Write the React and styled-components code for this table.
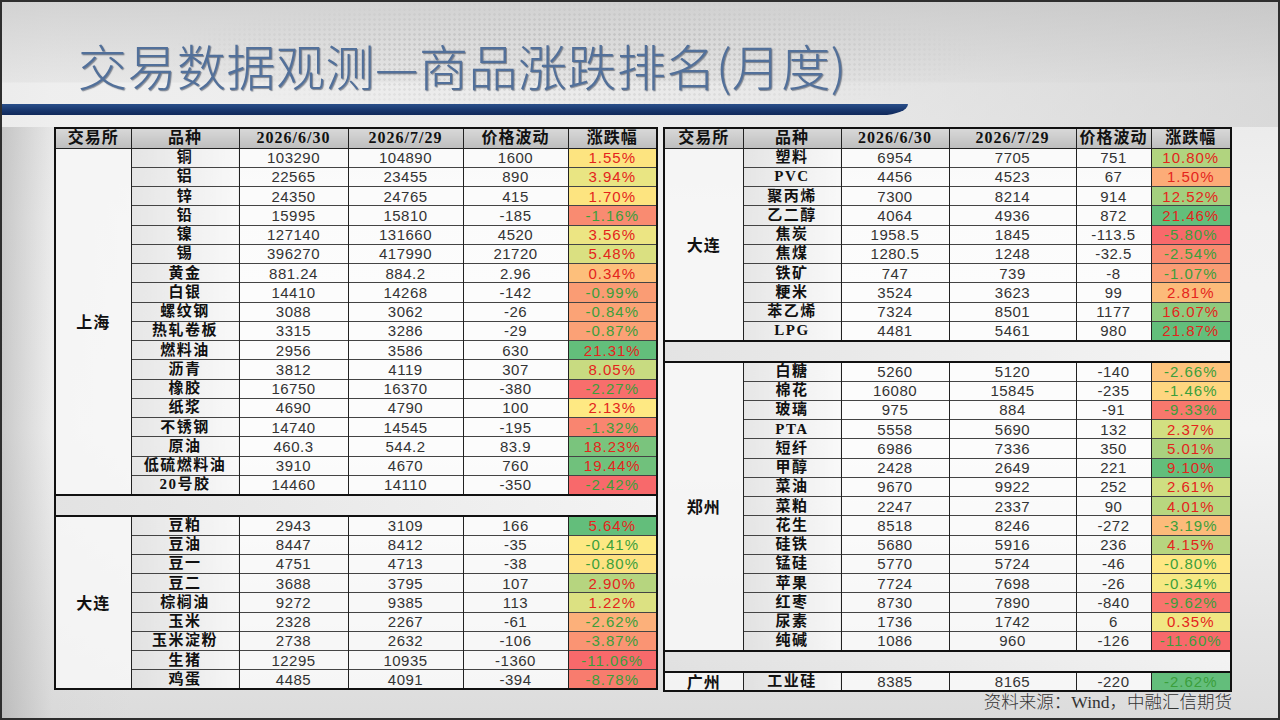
import React from 'react'
import styled, { createGlobalStyle } from 'styled-components'

const GlobalStyle = createGlobalStyle`
  html, body {
    margin: 0;
    padding: 0;
  }
  body {
    font-family: "Liberation Sans", "Noto Sans CJK SC", sans-serif;
    background: #222;
  }
`

const Slide = styled.div`
  width: 1280px;
  height: 720px;
  box-sizing: border-box;
  border: 2px solid #2e2e2e;
  overflow: hidden;
  position: relative;
  background:
    linear-gradient(90deg, rgba(150,150,150,0.45) 0, rgba(200,200,200,0.15) 50px, rgba(255,255,255,0) 130px),
    linear-gradient(180deg, #e4e4e4 0%, #f1f1f1 30%, #f4f4f4 60%, #dcdcdc 100%);
`

const Header = styled.div`
  height: 125px;
  display: flex;
  flex-direction: column;
  position: relative;
  background:
    linear-gradient(180deg, rgba(190,190,190,0.55) 0, rgba(215,215,215,0.35) 80px, rgba(240,240,240,0) 81px),
    linear-gradient(90deg, rgba(240,240,240,0.9) 0, rgba(232,232,232,0.6) 60%, rgba(205,205,205,0.6) 100%);

  &::before {
    content: "";
    position: absolute;
    left: 20px;
    top: 0;
    width: 1000px;
    height: 120px;
    background: radial-gradient(circle, rgba(160,160,160,0.55) 1px, transparent 1.6px) 0 0 / 5px 5px;
    -webkit-mask-image: radial-gradient(ellipse 55% 70% at 55% 45%, #000 30%, transparent 75%);
    mask-image: radial-gradient(ellipse 55% 70% at 55% 45%, #000 30%, transparent 75%);
    opacity: 0.6;
    pointer-events: none;
  }
`

const Title = styled.h1`
  margin: 0;
  padding: 37px 0 0 76px;
  font-family: "Noto Sans CJK SC", sans-serif;
  font-weight: 300;
  font-size: 49px;
  line-height: 52px;
  letter-spacing: 0.5px;
  color: #52709a;
  text-shadow: 1px 1px 1px rgba(30, 40, 60, 0.5);
  position: relative;
  white-space: nowrap;
`

const Bar = styled.div`
  margin-top: 13px;
  width: 906px;
  height: 11px;
  background: linear-gradient(180deg, #2a4f8a 0%, #17356b 60%, #10285a 100%);
  border-radius: 0 0 26px 0 / 0 0 11px 0;
  position: relative;
`

const Body = styled.div`
  display: flex;
  align-items: flex-start;
  gap: 5px;
  padding-left: 52px;
`

const Table = styled.table`
  border-collapse: collapse;
  table-layout: fixed;
  width: ${p => p.$w}px;
  border: 2px solid #111;
`

const HeadRow = styled.tr`
  height: 20px;
`

const Row = styled.tr`
  height: 19.25px;
`

const HeadCell = styled.th`
  padding: 0;
  border: 1px solid #222;
  background: linear-gradient(180deg, rgba(215,215,215,0.95), rgba(188,188,188,0.95));
  font-family: "Liberation Serif", "Noto Sans CJK SC", serif;
  font-weight: 700;
  font-size: 16px;
  letter-spacing: 1px;
  color: #111;
  line-height: 1;
  white-space: nowrap;
  overflow: hidden;
`

const Cell = styled.td`
  padding: 0;
  border-left: 1px solid #222;
  border-right: 1px solid #222;
  border-top: 1px solid #444;
  text-align: center;
  line-height: 1;
  white-space: nowrap;
`

const ExchangeCell = styled(Cell)`
  background: rgba(246, 246, 246, 0.88);
  font-family: "Noto Sans CJK SC", sans-serif;
  font-weight: 700;
  font-size: 16px;
  letter-spacing: 1px;
  color: #111;
`

const NameCell = styled(Cell)`
  background: linear-gradient(90deg, rgba(225,225,225,0.7), rgba(250,250,250,0.85));
  font-family: "Liberation Serif", "Noto Sans CJK SC", serif;
  font-weight: 700;
  font-size: 15px;
  letter-spacing: 1.5px;
  color: #111;
`

const NumCell = styled(Cell)`
  background: rgba(255, 255, 255, 0.72);
  font-size: 15px;
  letter-spacing: 0.5px;
  color: #333;
`

const PctCell = styled(Cell)`
  background: ${p => p.$bg};
  font-size: 15px;
  letter-spacing: 1px;
  color: ${p => (p.$up ? '#e4241c' : '#3b9f3b')};
`

const GapCell = styled.td`
  height: 19.25px;
  padding: 0;
  border-top: 2px solid #111;
  border-bottom: 2px solid #111;
  background: linear-gradient(90deg, rgba(225,225,225,0.85), rgba(245,245,245,0.85));
`

const Footer = styled.div`
  display: flex;
  justify-content: flex-end;
  padding-right: 46px;
  font-family: "Liberation Serif", "Noto Sans CJK SC", serif;
  font-size: 17.5px;
  font-weight: 300;
  color: #333;
  line-height: 20px;
`

const heads = ['交易所', '品种', '2026/6/30', '2026/7/29', '价格波动', '涨跌幅']

const leftGroups = [
  {
    ex: '上海',
    rows: [
      ['铜', '103290', '104890', '1600', '1.55%', '#fde480'],
      ['铝', '22565', '23455', '890', '3.94%', '#e9e583'],
      ['锌', '24350', '24765', '415', '1.70%', '#fde480'],
      ['铅', '15995', '15810', '-185', '-1.16%', '#f98b71'],
      ['镍', '127140', '131660', '4520', '3.56%', '#ece583'],
      ['锡', '396270', '417990', '21720', '5.48%', '#dae081'],
      ['黄金', '881.24', '884.2', '2.96', '0.34%', '#fdbf7b'],
      ['白银', '14410', '14268', '-142', '-0.99%', '#fa9c74'],
      ['螺纹钢', '3088', '3062', '-26', '-0.84%', '#fba376'],
      ['热轧卷板', '3315', '3286', '-29', '-0.87%', '#fba176'],
      ['燃料油', '2956', '3586', '630', '21.31%', '#63be7b'],
      ['沥青', '3812', '4119', '307', '8.05%', '#c8db81'],
      ['橡胶', '16750', '16370', '-380', '-2.27%', '#f86e6c'],
      ['纸浆', '4690', '4790', '100', '2.13%', '#fee983'],
      ['不锈钢', '14740', '14545', '-195', '-1.32%', '#f98570'],
      ['原油', '460.3', '544.2', '83.9', '18.23%', '#7ac47d'],
      ['低硫燃料油', '3910', '4670', '760', '19.44%', '#70c17c'],
      ['20号胶', '14460', '14110', '-350', '-2.42%', '#f8696b'],
    ],
  },
  {
    ex: '大连',
    rows: [
      ['豆粕', '2943', '3109', '166', '5.64%', '#63be7b'],
      ['豆油', '8447', '8412', '-35', '-0.41%', '#fde983'],
      ['豆一', '4751', '4713', '-38', '-0.80%', '#fee282'],
      ['豆二', '3688', '3795', '107', '2.90%', '#b6d57f'],
      ['棕榈油', '9272', '9385', '113', '1.22%', '#dce182'],
      ['玉米', '2328', '2267', '-61', '-2.62%', '#fcb07a'],
      ['玉米淀粉', '2738', '2632', '-106', '-3.87%', '#fa9473'],
      ['生猪', '12295', '10935', '-1360', '-11.06%', '#f8696b'],
      ['鸡蛋', '4485', '4091', '-394', '-8.78%', '#f87c6e'],
    ],
  },
]

const rightGroups = [
  {
    ex: '大连',
    rows: [
      ['塑料', '6954', '7705', '751', '10.80%', '#b1d47f'],
      ['PVC', '4456', '4523', '67', '1.50%', '#fcac78'],
      ['聚丙烯', '7300', '8214', '914', '12.52%', '#a4cf7e'],
      ['乙二醇', '4064', '4936', '872', '21.46%', '#63be7b'],
      ['焦炭', '1958.5', '1845', '-113.5', '-5.80%', '#f8696b'],
      ['焦煤', '1280.5', '1248', '-32.5', '-2.54%', '#f98a70'],
      ['铁矿', '747', '739', '-8', '-1.07%', '#fa9c74'],
      ['粳米', '3524', '3623', '99', '2.81%', '#fcbb7a'],
      ['苯乙烯', '7324', '8501', '1177', '16.07%', '#8fca7e'],
      ['LPG', '4481', '5461', '980', '21.87%', '#63be7b'],
    ],
  },
  {
    ex: '郑州',
    rows: [
      ['白糖', '5260', '5120', '-140', '-2.66%', '#fdc47d'],
      ['棉花', '16080', '15845', '-235', '-1.46%', '#fed680'],
      ['玻璃', '975', '884', '-91', '-9.33%', '#f8786d'],
      ['PTA', '5558', '5690', '132', '2.37%', '#d2df81'],
      ['短纤', '6986', '7336', '350', '5.01%', '#aad17f'],
      ['甲醇', '2428', '2649', '221', '9.10%', '#63be7b'],
      ['菜油', '9670', '9922', '252', '2.61%', '#cfde81'],
      ['菜粕', '2247', '2337', '90', '4.01%', '#b8d67f'],
      ['花生', '8518', '8246', '-272', '-3.19%', '#fcbb7a'],
      ['硅铁', '5680', '5916', '236', '4.15%', '#b7d57f'],
      ['锰硅', '5770', '5724', '-46', '-0.80%', '#fee783'],
      ['苹果', '7724', '7698', '-26', '-0.34%', '#f6e883'],
      ['红枣', '8730', '7890', '-840', '-9.62%', '#f8746d'],
      ['尿素', '1736', '1742', '6', '0.35%', '#f1e783'],
      ['纯碱', '1086', '960', '-126', '-11.60%', '#f8696b'],
    ],
  },
  {
    ex: '广州',
    rows: [['工业硅', '8385', '8165', '-220', '-2.62%', '#63be7b']],
  },
]

const PriceTable = ({ groups, cols }) => {
  const total = cols.reduce((a, b) => a + b, 0)
  return (
    <Table $w={total}>
      <colgroup>
        {cols.map((c, i) => <col key={i} style={{ width: c }} />)}
      </colgroup>
      <thead>
        <HeadRow>
          {heads.map(h => <HeadCell key={h}>{h}</HeadCell>)}
        </HeadRow>
      </thead>
      <tbody>
        {groups.map((g, gi) => (
          <React.Fragment key={gi}>
            {gi > 0 && (
              <Row>
                <GapCell colSpan={6} />
              </Row>
            )}
            {g.rows.map((r, ri) => (
              <Row key={r[0]}>
                {ri === 0 && <ExchangeCell rowSpan={g.rows.length}>{g.ex}</ExchangeCell>}
                <NameCell>{r[0]}</NameCell>
                <NumCell>{r[1]}</NumCell>
                <NumCell>{r[2]}</NumCell>
                <NumCell>{r[3]}</NumCell>
                <PctCell $bg={r[5]} $up={!r[4].startsWith('-')}>{r[4]}</PctCell>
              </Row>
            ))}
          </React.Fragment>
        ))}
      </tbody>
    </Table>
  )
}

const App = () => {
  return (
    <Slide>
      <GlobalStyle />
      <Header>
        <Title>交易数据观测—商品涨跌排名(月度)</Title>
        <Bar />
      </Header>
      <Body>
        <PriceTable groups={leftGroups} cols={[76, 108, 109, 115, 105, 89]} />
        <PriceTable groups={rightGroups} cols={[79, 98, 108, 127, 75, 80]} />
      </Body>
      <Footer>资料来源：Wind，中融汇信期货</Footer>
    </Slide>
  )
}

export default App
